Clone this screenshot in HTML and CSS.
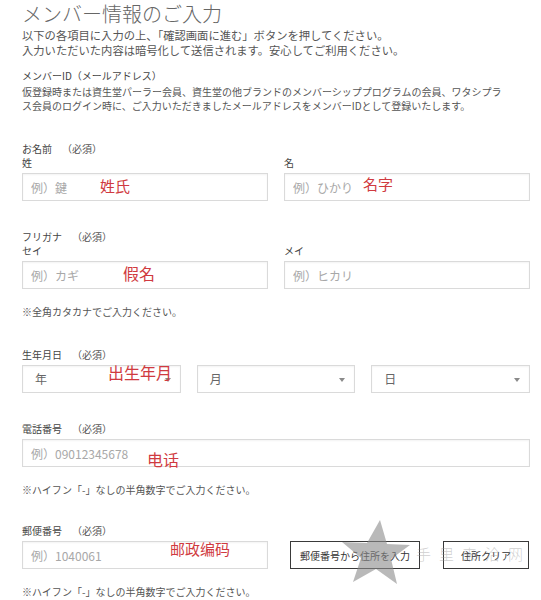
FILE: index.html
```html
<!DOCTYPE html>
<html lang="ja">
<head>
<meta charset="utf-8">
<title>メンバー情報のご入力</title>
<link rel="stylesheet" href="styles.css">
</head>
<body>
<main class="page">
  <h1 class="title">メンバー情報のご入力</h1>
  <p class="lead">以下の各項目に入力の上、「確認画面に進む」ボタンを押してください。<br>入力いただいた内容は暗号化して送信されます。安心してご利用ください。</p>

  <section class="member-id">
    <h2 class="label">メンバーID（メールアドレス）</h2>
    <p class="desc">仮登録時または資生堂パーラー会員、資生堂の他ブランドのメンバーシッププログラムの会員、ワタシプラ<br>ス会員のログイン時に、ご入力いただきましたメールアドレスをメンバーIDとして登録いたします。</p>
  </section>

  <section class="field">
    <div class="label">お名前<span class="req">（必須）</span></div>
    <div class="grid two">
      <div class="col">
        <div class="sub">姓</div>
        <div class="ctrl">
          <input class="input" type="text" placeholder="例）鍵">
          <span class="anno anno-sei">姓氏</span>
        </div>
      </div>
      <div class="col">
        <div class="sub">名</div>
        <div class="ctrl">
          <input class="input" type="text" placeholder="例）ひかり">
          <span class="anno anno-mei">名字</span>
        </div>
      </div>
    </div>
  </section>

  <section class="field">
    <div class="label">フリガナ<span class="req">（必須）</span></div>
    <div class="grid two">
      <div class="col">
        <div class="sub">セイ</div>
        <div class="ctrl">
          <input class="input" type="text" placeholder="例）カギ">
          <span class="anno anno-kana">假名</span>
        </div>
      </div>
      <div class="col">
        <div class="sub">メイ</div>
        <div class="ctrl">
          <input class="input" type="text" placeholder="例）ヒカリ">
        </div>
      </div>
    </div>
    <p class="hint">※全角カタカナでご入力ください。</p>
  </section>

  <section class="field">
    <div class="label">生年月日<span class="req">（必須）</span></div>
    <div class="grid three">
      <div class="ctrl select-wrap">
        <div class="select">年</div>
        <span class="anno anno-birth">出生年月</span>
      </div>
      <div class="ctrl select-wrap">
        <div class="select">月</div>
      </div>
      <div class="ctrl select-wrap">
        <div class="select">日</div>
      </div>
    </div>
  </section>

  <section class="field">
    <div class="label">電話番号<span class="req">（必須）</span></div>
    <div class="ctrl single">
      <input class="input" type="text" placeholder="例）09012345678">
      <span class="anno anno-tel">电话</span>
    </div>
    <p class="hint">※ハイフン「-」なしの半角数字でご入力ください。</p>
  </section>

  <section class="field field-postal">
    <div class="label">郵便番号<span class="req">（必須）</span></div>
    <div class="postal-row">
      <div class="ctrl postal-input">
        <input class="input" type="text" placeholder="例）1040061">
        <span class="anno anno-zip">邮政编码</span>
      </div>
      <button class="btn btn-lookup" type="button">郵便番号から住所を入力</button>
      <button class="btn btn-clear" type="button">住所クリア</button>
      <svg class="wm-star" width="70" height="66" viewBox="0 0 70 66" aria-hidden="true">
        <polygon points="40,0 47,24 70,25 51,39 57,64 36,49 13,62 21,38 2,22 27,23" fill="#8c8c8c"/>
      </svg>
      <span class="wm-text">手里来洽网</span>
    </div>
    <p class="hint">※ハイフン「-」なしの半角数字でご入力ください。</p>
  </section>
</main>
</body>
</html>
```

FILE: styles.css
```css
* {
  box-sizing: border-box;
}

html,
body {
  margin: 0;
  padding: 0;
  background: #ffffff;
}

body {
  width: 541px;
  font-family: "Noto Sans CJK JP", "Noto Sans", sans-serif;
  color: #444444;
}

.page {
  padding: 0 11px 0 22px;
}

.title {
  margin: 0;
  padding-top: 1px;
  font-size: 20px;
  line-height: 25px;
  font-weight: 300;
  color: #666666;
}

.lead {
  margin: 2px 0 0;
  font-size: 11.3px;
  line-height: 15px;
  color: #555555;
}

.member-id {
  margin-top: 11px;
}

.label {
  margin: 0;
  font-size: 10px;
  line-height: 14px;
  font-weight: 400;
  color: #444444;
}

.req {
  margin-left: 10px;
  color: #555555;
}

.desc {
  margin: 2px 0 0;
  font-size: 10px;
  line-height: 14px;
  color: #555555;
}

.field {
  margin-top: 29px;
}

.field-postal {
  margin-top: 27px;
}

.sub {
  font-size: 10px;
  line-height: 14px;
  color: #444444;
}

.grid {
  display: grid;
  column-gap: 16px;
}

.grid.two {
  grid-template-columns: 1fr 1fr;
}

.grid.three {
  grid-template-columns: 1fr 1fr 1fr;
  margin-top: 3px;
}

.col .ctrl {
  margin-top: 3px;
}

.ctrl {
  position: relative;
}

.single {
  margin-top: 3px;
}

.input {
  display: block;
  width: 100%;
  height: 28px;
  margin: 0;
  padding: 0 8px;
  border: 1px solid #dadada;
  border-radius: 0;
  box-shadow: inset 0 1px 2px rgba(0, 0, 0, 0.05);
  background: #ffffff;
  font-family: "Noto Sans CJK JP", "Noto Sans", sans-serif;
  font-size: 12px;
  color: #444444;
  outline: none;
}

.input::placeholder {
  color: #a8a8a8;
}

.select {
  height: 28px;
  padding: 0 12px;
  border: 1px solid #dadada;
  box-shadow: inset 0 1px 2px rgba(0, 0, 0, 0.05);
  font-size: 12px;
  line-height: 26px;
  color: #666666;
}

.select-wrap::after {
  content: "";
  position: absolute;
  right: 10px;
  top: 13px;
  border-left: 3px solid transparent;
  border-right: 3px solid transparent;
  border-top: 4px solid #8a8a8a;
}

.hint {
  margin: 16px 0 0;
  font-size: 10px;
  line-height: 14px;
  color: #555555;
}

.anno {
  position: absolute;
  font-family: "Noto Sans CJK SC", "Noto Sans CJK JP", sans-serif;
  font-size: 15px;
  line-height: 16px;
  color: #d03a40;
  white-space: nowrap;
  pointer-events: none;
}

.anno-sei {
  left: 78px;
  top: 5px;
}

.anno-mei {
  left: 79px;
  top: 3px;
}

.anno-kana {
  left: 101px;
  top: 4px;
  font-size: 16px;
}

.anno-birth {
  left: 86px;
  top: -1px;
  font-size: 16px;
  z-index: 2;
}

.anno-tel {
  left: 125px;
  top: 12px;
  font-size: 16px;
}

.anno-zip {
  left: 148px;
  top: 0;
}

.postal-row {
  position: relative;
  display: flex;
  align-items: stretch;
  margin-top: 3px;
}

.postal-input {
  width: 246px;
  flex: none;
}

.btn {
  height: 28px;
  margin: 0;
  padding: 0;
  border: 1px solid #3a3a3a;
  border-radius: 0;
  background: #ffffff;
  font-family: "Noto Sans CJK JP", "Noto Sans", sans-serif;
  font-size: 10px;
  color: #333333;
}

.btn-lookup {
  width: 130px;
  margin-left: 22px;
}

.btn-clear {
  width: 86px;
  margin-left: 23px;
}

.wm-star {
  position: absolute;
  left: 318px;
  top: -21px;
  opacity: 0.6;
  pointer-events: none;
}

.wm-text {
  position: absolute;
  left: 394px;
  top: 5px;
  font-family: "Noto Sans CJK SC", sans-serif;
  font-size: 15px;
  line-height: 16px;
  font-weight: 300;
  letter-spacing: 8px;
  white-space: nowrap;
  color: rgba(150, 150, 150, 0.45);
  pointer-events: none;
}
```
